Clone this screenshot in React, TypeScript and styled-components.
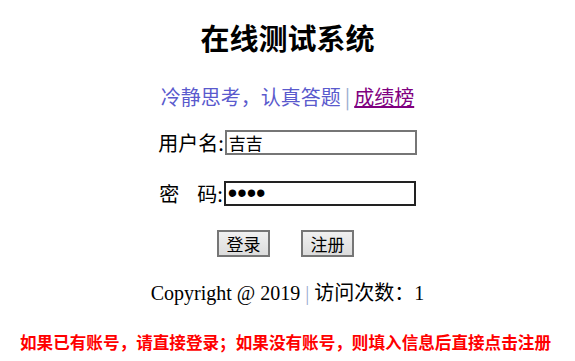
import styled, { createGlobalStyle } from "styled-components"

const GlobalStyle = createGlobalStyle`
    body {
        margin: 0;
        background: #fff;
        font-family: "Liberation Serif", "Noto Sans CJK SC", serif;
    }
`

const Page = styled.div`
    width: 575px;
    height: 361px;
    display: flex;
    flex-direction: column;
    align-items: center;
    overflow: hidden;
`

const Title = styled.h1`
    margin: 20px 0 0;
    font-family: "Noto Sans CJK SC", sans-serif;
    font-size: 29px;
    font-weight: 700;
    line-height: 34px;
    color: #000;
`

const Slogan = styled.p`
    margin: 30px 0 0;
    font-family: "Noto Sans CJK SC", sans-serif;
    font-size: 20px;
    line-height: 26px;
    color: #5a5acd;

    span {
        color: #9aaed0;
        margin: 0 4px;
    }

    a {
        color: #800080;
        text-decoration: underline;
    }
`

const Form = styled.form`
    margin-top: 20px;
    display: flex;
    flex-direction: column;
    align-items: center;
    gap: 26px;
`

const Field = styled.label`
    display: flex;
    align-items: center;
    height: 25px;
    font-family: "Noto Sans CJK SC", sans-serif;
    font-size: 20px;
    line-height: 25px;
    color: #000;
`

const LabelText = styled.span`
    white-space: pre;
`

const Input = styled.input<{ $secret?: boolean }>`
    box-sizing: border-box;
    width: 192px;
    height: 25px;
    margin: 0 0 0 1px;
    padding: 0 2px;
    border: 2px solid ${p => (p.$secret ? "#222" : "#767676")};
    font-family: ${p => (p.$secret ? `"Liberation Sans", sans-serif` : `"Noto Sans CJK SC", sans-serif`)};
    font-size: ${p => (p.$secret ? "27px" : "17px")};
    line-height: 21px;
    color: #000;
    outline: none;
`

const Buttons = styled.div`
    display: flex;
    gap: 31px;
    margin: -2px 4px 0 0;
`

const Button = styled.button`
    box-sizing: border-box;
    width: 53px;
    height: 27px;
    padding: 0;
    border: 2px solid #767676;
    background: linear-gradient(#f0f0f0, #dcdcdc);
    font-family: "Noto Sans CJK SC", sans-serif;
    font-size: 17px;
    line-height: 23px;
    color: #000;
`

const Footer = styled.p`
    margin: 23px 0 0;
    font-size: 20px;
    line-height: 26px;
    color: #000;

    span {
        color: #9aaed0;
    }
`

const Hint = styled.p`
    margin: 24px 0 0 -4px;
    font-family: "Noto Sans CJK SC", sans-serif;
    font-size: 16.6px;
    font-weight: 700;
    line-height: 24px;
    color: #ff0000;
    white-space: nowrap;
`

export default function App() {
    return (
        <>
            <GlobalStyle />
            <Page>
                <Title>在线测试系统</Title>
                <Slogan>
                    冷静思考，认真答题<span>|</span><a href="#">成绩榜</a>
                </Slogan>
                <Form onSubmit={e => e.preventDefault()}>
                    <Field>
                        <LabelText>用户名:</LabelText>
                        <Input type="text" defaultValue="吉吉" />
                    </Field>
                    <Field>
                        <LabelText>{"密    码:"}</LabelText>
                        <Input type="password" defaultValue="1234" $secret />
                    </Field>
                    <Buttons>
                        <Button type="submit">登录</Button>
                        <Button type="button">注册</Button>
                    </Buttons>
                </Form>
                <Footer>
                    Copyright @ 2019 <span>|</span> 访问次数：1
                </Footer>
                <Hint>如果已有账号，请直接登录；如果没有账号，则填入信息后直接点击注册</Hint>
            </Page>
        </>
    )
}
